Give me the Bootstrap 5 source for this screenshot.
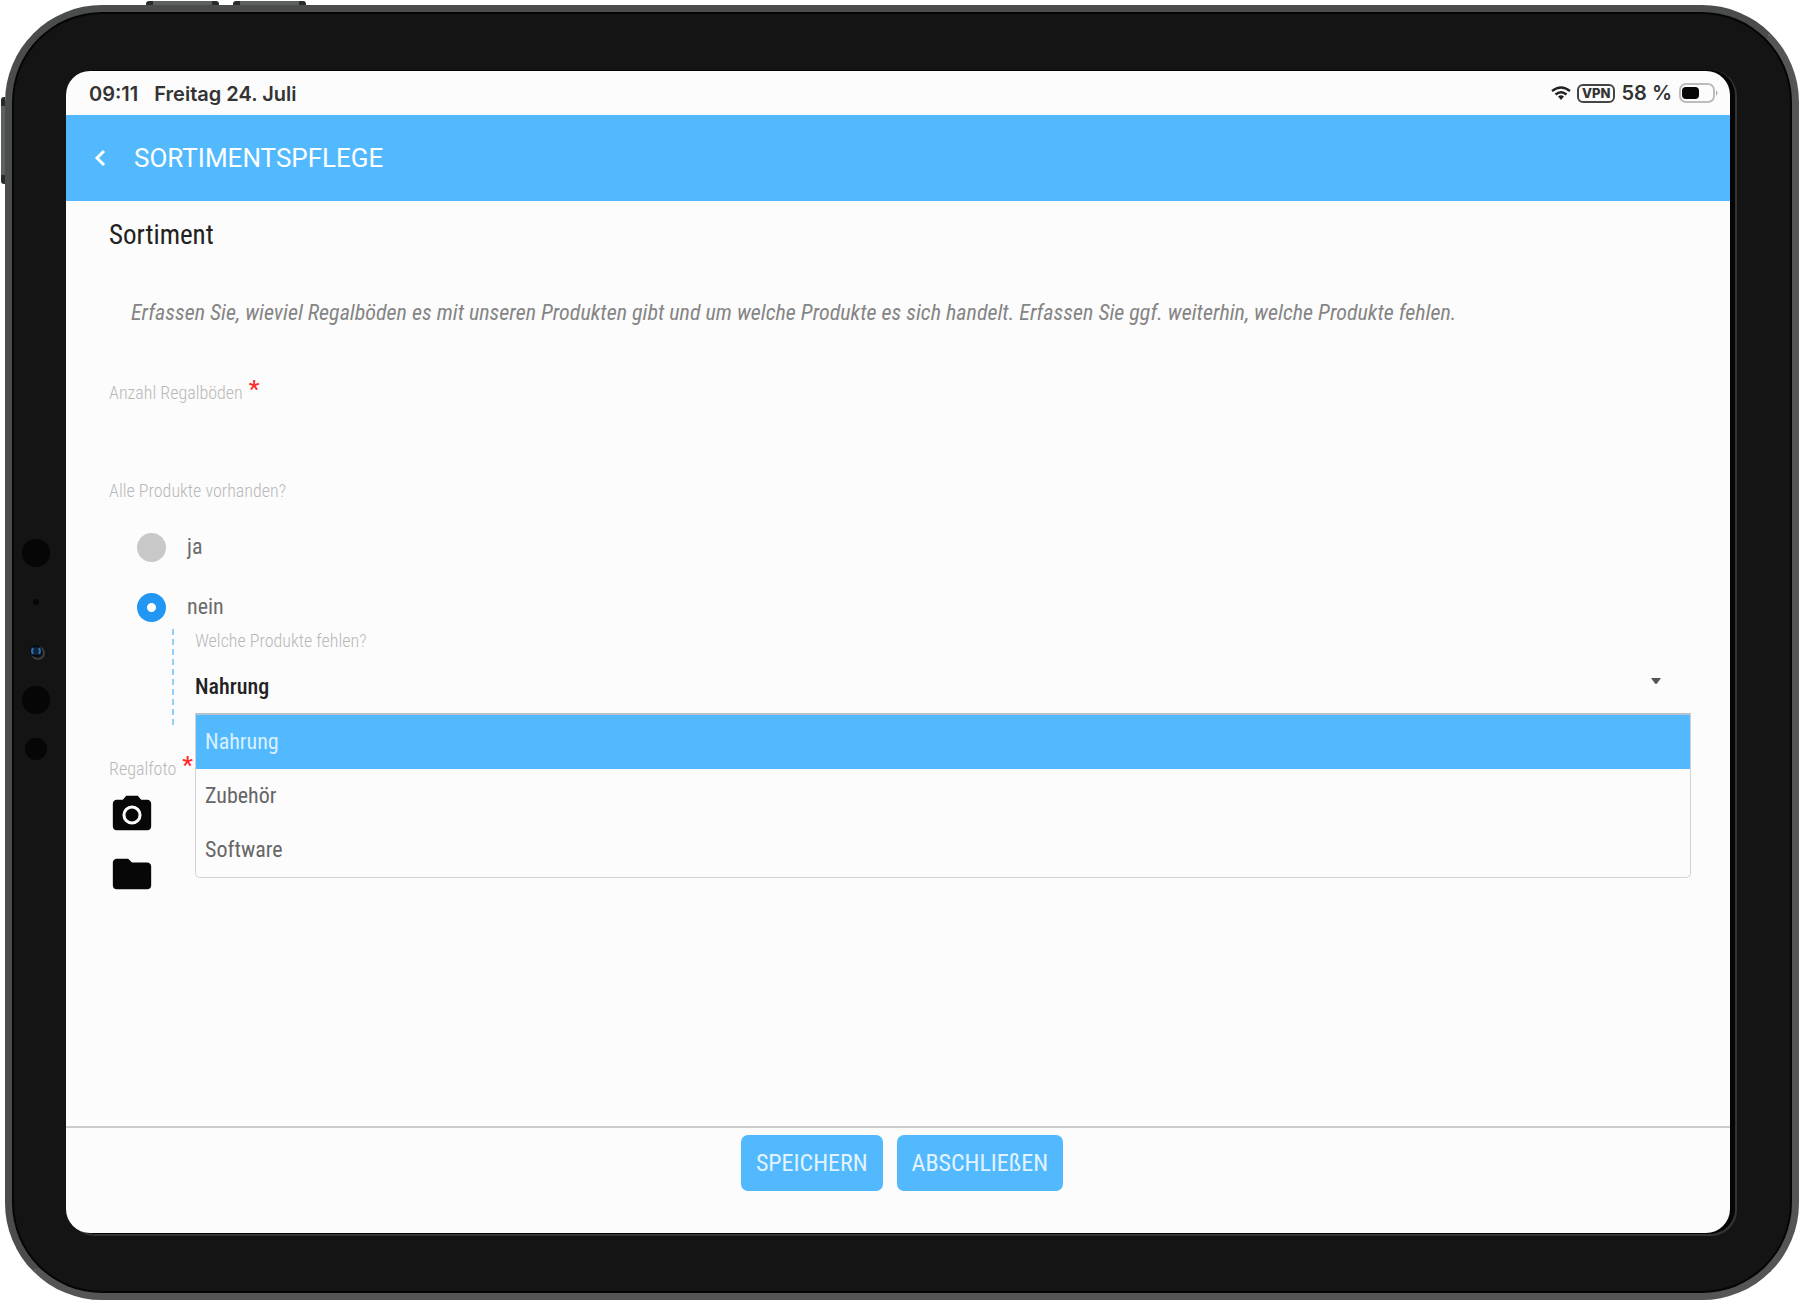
<!DOCTYPE html>
<html lang="de">
<head>
<meta charset="utf-8">
<meta name="viewport" content="width=device-width, initial-scale=1">
<title>Sortimentspflege</title>
<link href="https://cdn.jsdelivr.net/npm/bootstrap@5.3.0/dist/css/bootstrap.min.css" rel="stylesheet">
<style>
  :root { --sky: #52b9ff; --ink: #141414; --paper: #fcfcfc; }
  body { background: #fff; font-family: "Roboto Condensed", Roboto, sans-serif; font-size: 22px; line-height: 32px; color: #6b6b6b; }
  .stage { min-height: 100vh; padding: 5px 1px 0 5px; }

  /* tablet body */
  .tablet { background: var(--ink); border: 7px solid #4b4d4d; border-right-color: #555; border-bottom-color: #555; border-radius: 97px;
    box-shadow: inset 0 0 0 2px #050505; padding: 59px 62px 60px 54px; }
  .side-key { background: #5c605f; border: 0 solid #2a2c2b; }
  .key-top { top: -11px; width: 73px; height: 4px; border-width: 0 7px; border-radius: 3px 3px 0 0; }
  .key-a { left: 134px; }
  .key-b { left: 221px; }
  .key-left { left: -11px; top: 85px; width: 4px; height: 87px; border-width: 9px 0; border-radius: 3px 0 0 3px; }
  .sensors { left: 9px; top: 527px; width: 32px; height: 234px; }
  .display { background: var(--paper); border-radius: 24px; overflow: hidden; box-shadow: 4px 0 0 1px #050505, 5px 1px 0 2px #333; }

  /* status line and title bar */
  .status { height: 44px; padding: 0 12px 0 23px; font: 600 20px/46px Inter, sans-serif; color: #333; }
  .indicators { gap: 6px; }
  .vpn { border: 2px solid #444; border-radius: 6px; font-size: 13px; font-weight: 800; line-height: 15px; padding: 0 3px; }
  .titlebar { background: var(--sky); height: 86px; padding: 0 28px; }
  .titlebar h1 { font: 400 26px/32px Roboto, sans-serif; color: #fff; }
  .back { width: 12px; height: 18px; line-height: 0; }

  /* form */
  .sheet { padding: 16px 39px 24px 43px; }
  .sheet h2 { font-size: 27px; line-height: 36px; color: #222; margin-bottom: 44px; }
  .hint { padding-left: 22px; margin-bottom: 52px; font-style: italic; color: #858585; }
  .caption { font-size: 18px; line-height: 24px; font-weight: 300; color: #b8b8b8; float: none; width: auto; margin: 0; }
  .req { font-size: 24px; line-height: 16px; color: #ff2a2a; font-weight: 500; margin-left: 6px; }
  .count { height: 40px; border: 0; background: transparent; margin-bottom: 34px; }
  .choices { padding: 22px 0 0 28px; gap: 16px; }
  .choice { min-height: 44px; gap: 21px; }
  .choice .form-check-input { width: 29px; height: 29px; margin: 0; float: none; border: 0; background: #c8c8c8; }
  .choice .form-check-input:checked { background: radial-gradient(circle, #fff 4px, #2196f3 5px); }
  .nested { margin-left: 63px; border-left: 2px dashed #8fd0ff; padding: 0 0 12px 21px; margin-bottom: 32px; }
  .picked { height: 54px; margin-top: 6px; padding: 0 50px 0 0; border: 0; font-size: 22px; font-weight: 500; color: #222; background-color: transparent;
    background-image: url("data:image/svg+xml,%3Csvg xmlns='http://www.w3.org/2000/svg' viewBox='0 0 10 6'%3E%3Cpath d='M0 0h10L6 5.500Q5 6.300 4 5.500z' fill='%23555'/%3E%3C/svg%3E");
    background-size: 10px 6px; background-position: right 30px top 19px; }
  .options { top: 100%; border: 1px solid #d2d2d2; border-top: 2px solid #b5c3cc; border-radius: 0 0 5px 5px; background: var(--paper); }
  .options .list-group-item { border: 0; padding: 11px 9px; color: #666; background: transparent; font-size: 22px; line-height: 32px; }
  .options .active { background: var(--sky); color: #d9f0ff; margin-top: 0; }
  .tools { gap: 12px; padding-top: 10px; }
  .tool { width: 46px; height: 47px; line-height: 0; color: #070707; }

  .actions { border-top: 2px solid #ccc; padding: 7px 0 42px 8px; gap: 14px; }
  .actions .btn { --bs-btn-bg: var(--sky); --bs-btn-color: #e2f3ff; --bs-btn-hover-bg: #38aaf6; --bs-btn-hover-color: #fff;
    --bs-btn-padding-x: 15px; --bs-btn-padding-y: 12px; --bs-btn-border-radius: 7px; --bs-btn-font-size: 24px; --bs-btn-line-height: 32px; border: 0; }
</style>
<script src="https://cdn.jsdelivr.net/npm/bootstrap@5.3.0/dist/js/bootstrap.bundle.min.js"></script>
</head>
<body>
<div class="stage d-flex flex-column">
  <div class="tablet position-relative flex-grow-1 d-flex flex-column">
    <span class="side-key key-top key-a position-absolute"></span>
    <span class="side-key key-top key-b position-absolute"></span>
    <span class="side-key key-left position-absolute"></span>
    <svg class="sensors position-absolute" viewBox="0 0 32 234" aria-hidden="true">
      <g fill="#060606"><circle cx="15" cy="14" r="14"/><circle cx="15" cy="63" r="3"/><circle cx="15" cy="161" r="14"/><circle cx="15" cy="210" r="11"/></g>
      <circle cx="17" cy="114" r="6" fill="none" stroke="#3a3d40" stroke-width="2"/>
      <circle cx="15" cy="112" r="6" fill="#060b12"/>
      <circle cx="15" cy="112" r="4" fill="#0e2440"/>
      <path d="M12 109q-2 3 0 6M18 109q2 3 0 6" fill="none" stroke="#2f6ea8" stroke-width="2"/>
    </svg>

    <div class="display flex-grow-1 d-flex flex-column">
      <div class="status d-flex justify-content-between">
        <div class="d-flex gap-3"><span>09:11</span><span>Freitag 24. Juli</span></div>
        <div class="indicators d-flex align-items-center">
          <svg width="20" height="14" viewBox="0 0 20 14" fill="none" stroke="#222" stroke-width="2.500" aria-hidden="true">
            <path d="M1 5Q10-2 19 5M4.500 8.500Q10 4 15.500 8.500"/><path d="M7 10.500Q10 8 13 10.500L10 14z" fill="#222" stroke="none"/>
          </svg>
          <span class="vpn">VPN</span>
          <span>58 %</span>
          <svg width="40" height="20" viewBox="0 0 40 20" aria-hidden="true">
            <rect x="2" y="1" width="34" height="18" rx="6" fill="none" stroke="#bcbcbc" stroke-width="2"/>
            <rect x="4" y="4" width="17" height="12" rx="4" fill="#070707"/><path d="M38 7q3 3 0 6z" fill="#aaa"/>
          </svg>
        </div>
      </div>

      <header class="titlebar d-flex align-items-center gap-4">
        <button class="back btn p-0 border-0" type="button" aria-label="Zurück">
          <svg width="12" height="18" viewBox="0 0 12 18" fill="none" stroke="#fff" stroke-width="3" aria-hidden="true"><path d="M10 2L3 9l7 7"/></svg>
        </button>
        <h1 class="m-0 ps-1">SORTIMENTSPFLEGE</h1>
      </header>

      <form class="flex-grow-1 d-flex flex-column">
        <div class="sheet flex-grow-1">
          <h2 class="fw-normal">Sortiment</h2>
          <p class="hint">Erfassen Sie, wieviel Regalböden es mit unseren Produkten gibt und um welche Produkte es sich handelt. Erfassen Sie ggf. weiterhin, welche Produkte fehlen.</p>

          <label class="caption d-flex" for="count">Anzahl Regalböden <span class="req">*</span></label>
          <input class="count d-block w-100" id="count" type="text" inputmode="numeric" required>

          <fieldset>
            <legend class="caption">Alle Produkte vorhanden?</legend>
            <div class="choices d-flex flex-column">
              <div class="choice d-flex align-items-center">
                <input class="form-check-input" type="radio" name="complete" id="yes"><label for="yes">ja</label>
              </div>
              <div class="choice d-flex align-items-center">
                <input class="form-check-input" type="radio" name="complete" id="no" checked><label for="no">nein</label>
              </div>
            </div>
            <div class="nested">
              <label class="caption d-block" for="missing">Welche Produkte fehlen?</label>
              <div class="position-relative">
                <select class="picked form-select" id="missing"><option>Nahrung</option><option>Zubehör</option><option>Software</option></select>
                <div class="options list-group position-absolute w-100">
                  <button type="button" class="list-group-item list-group-item-action active">Nahrung</button>
                  <button type="button" class="list-group-item list-group-item-action">Zubehör</button>
                  <button type="button" class="list-group-item list-group-item-action">Software</button>
                </div>
              </div>
            </div>
          </fieldset>

          <div class="caption d-flex" id="photo">Regalfoto <span class="req">*</span></div>
          <div class="tools d-flex flex-column align-items-start" role="group" aria-labelledby="photo">
            <button class="tool btn p-0 border-0" type="button" aria-label="Foto aufnehmen">
              <svg width="46" height="46" viewBox="0 0 24 24" fill="currentColor" aria-hidden="true"><path fill-rule="evenodd" d="M9 2L7.200 4H4C2.900 4 2 4.900 2 6v12c0 1.100.9 2 2 2h16c1.100 0 2-.9 2-2V6c0-1.100-.9-2-2-2h-3.200L15 2zM12 7a5 5 0 1 1 0 10a5 5 0 1 1 0-10z"/><circle cx="12" cy="12" r="3.400"/></svg>
            </button>
            <button class="tool btn p-0 border-0" type="button" aria-label="Datei wählen">
              <svg width="46" height="46" viewBox="0 0 24 24" fill="currentColor" aria-hidden="true"><path d="M10 4H4c-1.100 0-2 .9-2 2v12c0 1.100.9 2 2 2h16c1.100 0 2-.9 2-2V8c0-1.100-.9-2-2-2h-8z"/></svg>
            </button>
          </div>
        </div>

        <footer class="actions d-flex justify-content-center">
          <button class="btn" type="submit">SPEICHERN</button>
          <button class="btn" type="button">ABSCHLIEßEN</button>
        </footer>
      </form>
    </div>
  </div>
</div>
</body>
</html>
